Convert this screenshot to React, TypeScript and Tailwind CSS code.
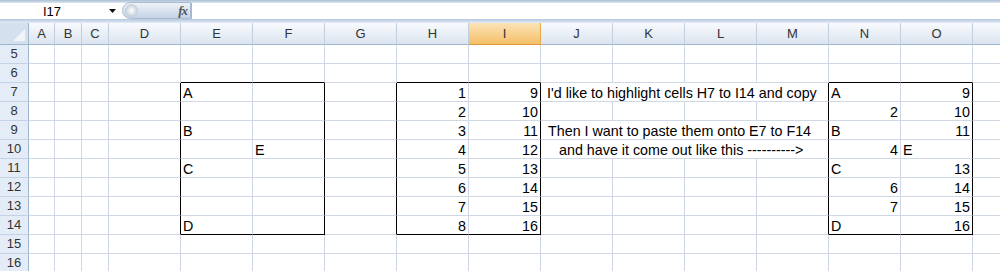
import React from "react"

type Cell = { t: string; a?: "l" | "r" | "c"; span?: number; pad?: string }

const COLS = ["A", "B", "C", "D", "E", "F", "G", "H", "I", "J", "K", "L", "M", "N", "O", "P"]
const WIDTH: Record<string, string> = {
  A: "w-[26px]",
  B: "w-[27px]",
  C: "w-[27px]",
}
const ROWS = [5, 6, 7, 8, 9, 10, 11, 12, 13, 14, 15, 16]

const boxes = [
  { c1: 4, c2: 5, r1: 7, r2: 14 },
  { c1: 7, c2: 8, r1: 7, r2: 14 },
  { c1: 13, c2: 14, r1: 7, r2: 14 },
]

// sheet contents, keyed "row:col"
const data: Record<string, Cell> = {
  "7:E": { t: "A" },
  "9:E": { t: "B" },
  "10:F": { t: "E" },
  "11:E": { t: "C" },
  "14:E": { t: "D" },
  "7:J": { t: "I'd like to highlight cells H7 to I14 and copy", span: 4, pad: "pl-[6px]" },
  "9:J": { t: "Then I want to paste them onto E7 to F14", span: 4, pad: "pl-[7px]" },
  "10:J": { t: "and have it come out like this ---------->", span: 4, pad: "pl-[18px]" },
  "7:N": { t: "A" },
  "7:O": { t: "9", a: "r" },
  "8:N": { t: "2", a: "r" },
  "8:O": { t: "10", a: "r" },
  "9:N": { t: "B" },
  "9:O": { t: "11", a: "r" },
  "10:N": { t: "4", a: "r" },
  "10:O": { t: "E" },
  "11:N": { t: "C" },
  "11:O": { t: "13", a: "r" },
  "12:N": { t: "6", a: "r" },
  "12:O": { t: "14", a: "r" },
  "13:N": { t: "7", a: "r" },
  "13:O": { t: "15", a: "r" },
  "14:N": { t: "D" },
  "14:O": { t: "16", a: "r" },
}
for (let i = 0; i < 8; i++) {
  data[`${7 + i}:H`] = { t: String(1 + i), a: "r" }
  data[`${7 + i}:I`] = { t: String(9 + i), a: "r" }
}

const inBox = (c: number, r: number) => boxes.some((b) => c >= b.c1 && c <= b.c2 && r >= b.r1 && r <= b.r2)

function blackRight(last: number, r: number) {
  return boxes.some(
    (b) => r >= b.r1 && r <= b.r2 && (b.c2 === last || b.c1 === last + 1)
  )
}

function blackBottom(first: number, last: number, r: number) {
  for (let c = first; c <= last; c++) {
    if (boxes.some((b) => c >= b.c1 && c <= b.c2 && (b.r2 === r || b.r1 === r + 1))) return true
  }
  return false
}

function FormulaBar() {
  return (
    <div className="h-[23px] flex flex-col bg-[#dbe5f1]">
      <div className="h-[3px] bg-linear-to-b from-[#aabdd3] to-[#dfe8f3]" />
      <div className="h-[16px] flex bg-white">
        <div className="w-[119px] flex items-center relative">
          <span className="pl-[43px] text-[13px] leading-none text-black">I17</span>
          <svg className="absolute left-[109px] top-[6px]" width="8" height="4" viewBox="0 0 8 4">
            <path d="M0 0h7L3.5 4z" fill="#111" />
          </svg>
        </div>
        <div className="w-[3px] bg-white" />
        <div className="w-[69px] h-[17px] -mt-[1px] flex items-center justify-between rounded-l-full bg-linear-to-b from-[#eef2f8] via-[#d9e3ef] to-[#c3d2e5] border border-[#a9bcd3] pr-[3px]">
          <span className="ml-[2px] w-[13px] h-[13px] rounded-full bg-radial from-white to-[#b9c3cf] border border-[#c6cfda]" />
          <span className="font-['Liberation_Serif',serif] italic font-bold text-[13px] leading-none text-[#555] tracking-[-1px]">
            fx
          </span>
        </div>
        <div className="flex-1 border-l border-[#a5b7cc] bg-white" />
      </div>
      <div className="h-[4px] bg-linear-to-b from-[#b6c8dc] via-[#c9d8ea] to-[#e6edf6]" />
    </div>
  )
}

function HeaderRow() {
  return (
    <div className="flex h-[22px]">
      <div className="w-[29px] shrink-0 relative bg-[#d4e0ee] border-r border-b border-[#9eb6ce]">
        <svg className="absolute right-[3px] bottom-[3px]" width="12" height="12" viewBox="0 0 12 12">
          <path d="M12 0V12H0z" fill="#f1f5fa" />
        </svg>
      </div>
      {COLS.map((c) => {
        const sel = c === "I"
        return (
          <div
            key={c}
            className={`${WIDTH[c] ?? "w-[72px]"} shrink-0 flex items-center justify-center border-r border-b text-[13px] text-[#333] ${
              sel
                ? "bg-linear-to-b from-[#fae3b4] to-[#f4bf67] border-r-[#e8a84c] border-b-[#e0963a]"
                : "bg-linear-to-b from-[#f8fafd] to-[#dbe4ef] border-r-[#c3cfdd] border-b-[#9eb6ce]"
            }`}
          >
            {/* P is scrolled mostly out of view, its letter sits past the edge */}
            {c === "P" ? null : c}
          </div>
        )
      })}
    </div>
  )
}

function SheetRow({ r }: { r: number }) {
  const cells: React.ReactNode[] = []
  let i = 0
  while (i < COLS.length) {
    const col = COLS[i]
    const cell = data[`${r}:${col}`]
    const span = cell?.span ?? 1
    const last = i + span - 1
    const right = blackRight(last, r) ? "border-r-black" : "border-r-[#d0d7e5]"
    const bottom = blackBottom(i, last, r) ? "border-b-black" : "border-b-[#d0d7e5]"
    const width = span === 4 ? "w-[288px]" : WIDTH[col] ?? "w-[72px]"
    const align = cell?.a === "r" ? "justify-end" : "justify-start"
    cells.push(
      <div
        key={col}
        className={`${width} shrink-0 flex items-end ${align} border-r border-b ${right} ${bottom} ${cell?.pad ?? "px-[2px]"} ${
          inBox(i, r) ? "bg-white" : ""
        }`}
      >
        {cell && <span className="text-[14.3px] leading-[15px] whitespace-nowrap text-black">{cell.t}</span>}
      </div>
    )
    i += span
  }
  return (
    <div className="flex h-[19px]">
      <div className="w-[29px] shrink-0 flex items-center justify-center bg-[#e4ecf7] border-r border-r-[#9eb6ce] border-b border-b-[#c5d2e3] text-[13px] text-[#333]">
        {r}
      </div>
      {cells}
    </div>
  )
}

export default function App() {
  return (
    <div className="w-[1000px] h-[271px] overflow-hidden bg-white font-['Liberation_Sans',Arial,sans-serif]">
      <FormulaBar />
      <HeaderRow />
      {ROWS.map((r) => (
        <SheetRow key={r} r={r} />
      ))}
    </div>
  )
}
